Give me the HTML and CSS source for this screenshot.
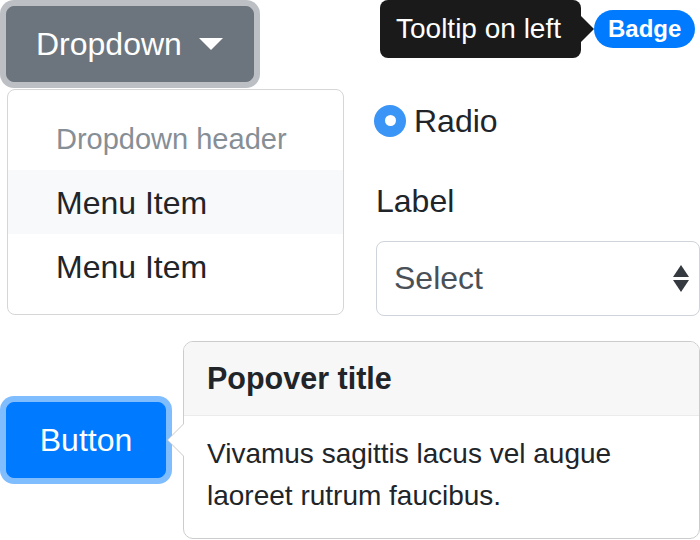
FILE: index.html
```html
<!DOCTYPE html>
<html lang="en">
<head>
<meta charset="utf-8">
<title>Components</title>
<link rel="stylesheet" href="styles.css">
</head>
<body>
<div class="page">
  <div class="top">
    <div class="col-left">
      <button class="btn btn-secondary">
        <span>Dropdown</span>
        <span class="caret"></span>
      </button>
      <div class="dropdown-menu">
        <div class="dropdown-header">Dropdown header</div>
        <div class="dropdown-item hover">Menu Item</div>
        <div class="dropdown-item">Menu Item</div>
      </div>
    </div>
    <div class="col-right">
      <div class="tip-row">
        <div class="tooltip">Tooltip on left</div>
        <span class="badge">Badge</span>
      </div>
      <label class="radio"><span class="radio-dot"></span>Radio</label>
      <div class="form-label">Label</div>
      <div class="select">
        <span>Select</span>
        <svg class="select-arrows" width="16" height="27" viewBox="0 0 16 27">
          <polygon points="8,0 16,12 0,12" fill="#343a40"/>
          <polygon points="0,15 16,15 8,27" fill="#343a40"/>
        </svg>
      </div>
    </div>
  </div>
  <div class="bottom">
    <button class="btn btn-primary">Button</button>
    <div class="popover">
      <div class="popover-header">Popover title</div>
      <div class="popover-body">Vivamus sagittis lacus vel augue laoreet rutrum faucibus.</div>
    </div>
  </div>
</div>
</body>
</html>
```

FILE: styles.css
```css
* {
  box-sizing: border-box;
}

html, body {
  margin: 0;
  padding: 0;
  background: #ffffff;
}

body {
  font-family: "Liberation Sans", Arial, sans-serif;
  color: #212529;
  font-size: 32px;
  line-height: 48px;
}

.page {
  width: 700px;
}

.top {
  display: grid;
  grid-template-columns: 374px 326px;
}

.col-left {
  display: flex;
  flex-direction: column;
  align-items: flex-start;
}

.btn {
  font-family: inherit;
  font-size: 32px;
  line-height: 48px;
  height: 76px;
  border: 1px solid transparent;
  border-radius: 8px;
  color: #ffffff;
  display: flex;
  align-items: center;
  margin: 0;
  padding: 0;
  cursor: pointer;
}

.btn-secondary {
  margin: 6px 0 0 6px;
  width: 248px;
  padding: 0 30px 0 29px;
  background: #6c757d;
  border-color: #6c757d;
  box-shadow: 0 0 0 6px #bcc0c4;
  gap: 17px;
}

.caret {
  width: 0;
  height: 0;
  border-top: 12px solid #ffffff;
  border-left: 12px solid transparent;
  border-right: 12px solid transparent;
}

.dropdown-menu {
  margin: 7px 0 0 7px;
  width: 337px;
  padding: 16px 0;
  border: 1px solid #d6d6d6;
  border-radius: 8px;
  background: #ffffff;
}

.dropdown-header {
  padding: 12px 48px 10px;
  font-size: 29px;
  line-height: 42px;
  color: #868e96;
}

.dropdown-item {
  padding: 9px 48px 7px;
  font-size: 32px;
  line-height: 48px;
  color: #212529;
}

.dropdown-item.hover {
  background: #f8f9fa;
}

.col-right {
  display: flex;
  flex-direction: column;
  align-items: flex-start;
}

.tip-row {
  display: flex;
  align-items: center;
  margin-left: 6px;
}

.tooltip {
  position: relative;
  background: #1a1a1a;
  color: #ffffff;
  font-size: 28px;
  line-height: 42px;
  padding: 8px 16px;
  border-radius: 8px;
  width: 201px;
  white-space: nowrap;
}

.tooltip::after {
  content: "";
  position: absolute;
  right: -13px;
  top: calc(50% - 13px);
  border-left: 13px solid #1a1a1a;
  border-top: 13px solid transparent;
  border-bottom: 13px solid transparent;
}

.badge {
  margin-left: 13px;
  background: #007bff;
  color: #ffffff;
  font-weight: bold;
  font-size: 24px;
  line-height: 24px;
  padding: 7px 14px;
  border-radius: 100px;
}

.radio {
  margin-top: 39px;
  display: flex;
  align-items: center;
  gap: 8px;
  font-size: 32px;
  line-height: 48px;
}

.radio-dot {
  width: 32px;
  height: 32px;
  margin-top: -1px;
  border-radius: 50%;
  background: #3b95f7;
  display: flex;
  align-items: center;
  justify-content: center;
}

.radio-dot::after {
  content: "";
  width: 11px;
  height: 11px;
  border-radius: 50%;
  background: #ffffff;
}

.form-label {
  margin: 32px 0 0 2px;
  font-size: 32px;
  line-height: 48px;
}

.select {
  margin: 16px 0 0 2px;
  width: 324px;
  height: 75px;
  border: 1px solid #ced4da;
  border-radius: 8px;
  display: flex;
  align-items: center;
  justify-content: space-between;
  padding: 0 10px 2px 17px;
  color: #495057;
  font-size: 32px;
}

.select-arrows {
  display: block;
  margin-top: 2px;
}

.bottom {
  margin-top: 25px;
  display: flex;
  align-items: center;
}

.btn-primary {
  margin-left: 6px;
  width: 160px;
  justify-content: center;
  background: #007bff;
  border-color: #007bff;
  box-shadow: 0 0 0 6px #80bdff;
}

.popover {
  position: relative;
  margin-left: 17px;
  width: 517px;
  border: 1px solid #cccccc;
  border-radius: 10px;
  background: #ffffff;
}

.popover::before {
  content: "";
  position: absolute;
  left: -17px;
  top: calc(50% - 16px);
  border-right: 16px solid #c8c8c8;
  border-top: 16px solid transparent;
  border-bottom: 16px solid transparent;
}

.popover::after {
  content: "";
  position: absolute;
  left: -16px;
  top: calc(50% - 16px);
  border-right: 16px solid #ffffff;
  border-top: 16px solid transparent;
  border-bottom: 16px solid transparent;
}

.popover-header {
  padding: 14px 23px 15px;
  font-size: 30.5px;
  line-height: 44px;
  font-weight: bold;
  color: #212529;
  background: #f7f7f7;
  border-bottom: 1px solid #ebebeb;
  border-radius: 9px 9px 0 0;
}

.popover-body {
  padding: 17px 23px 21px;
  font-size: 28px;
  line-height: 42px;
  color: #212529;
}
```
